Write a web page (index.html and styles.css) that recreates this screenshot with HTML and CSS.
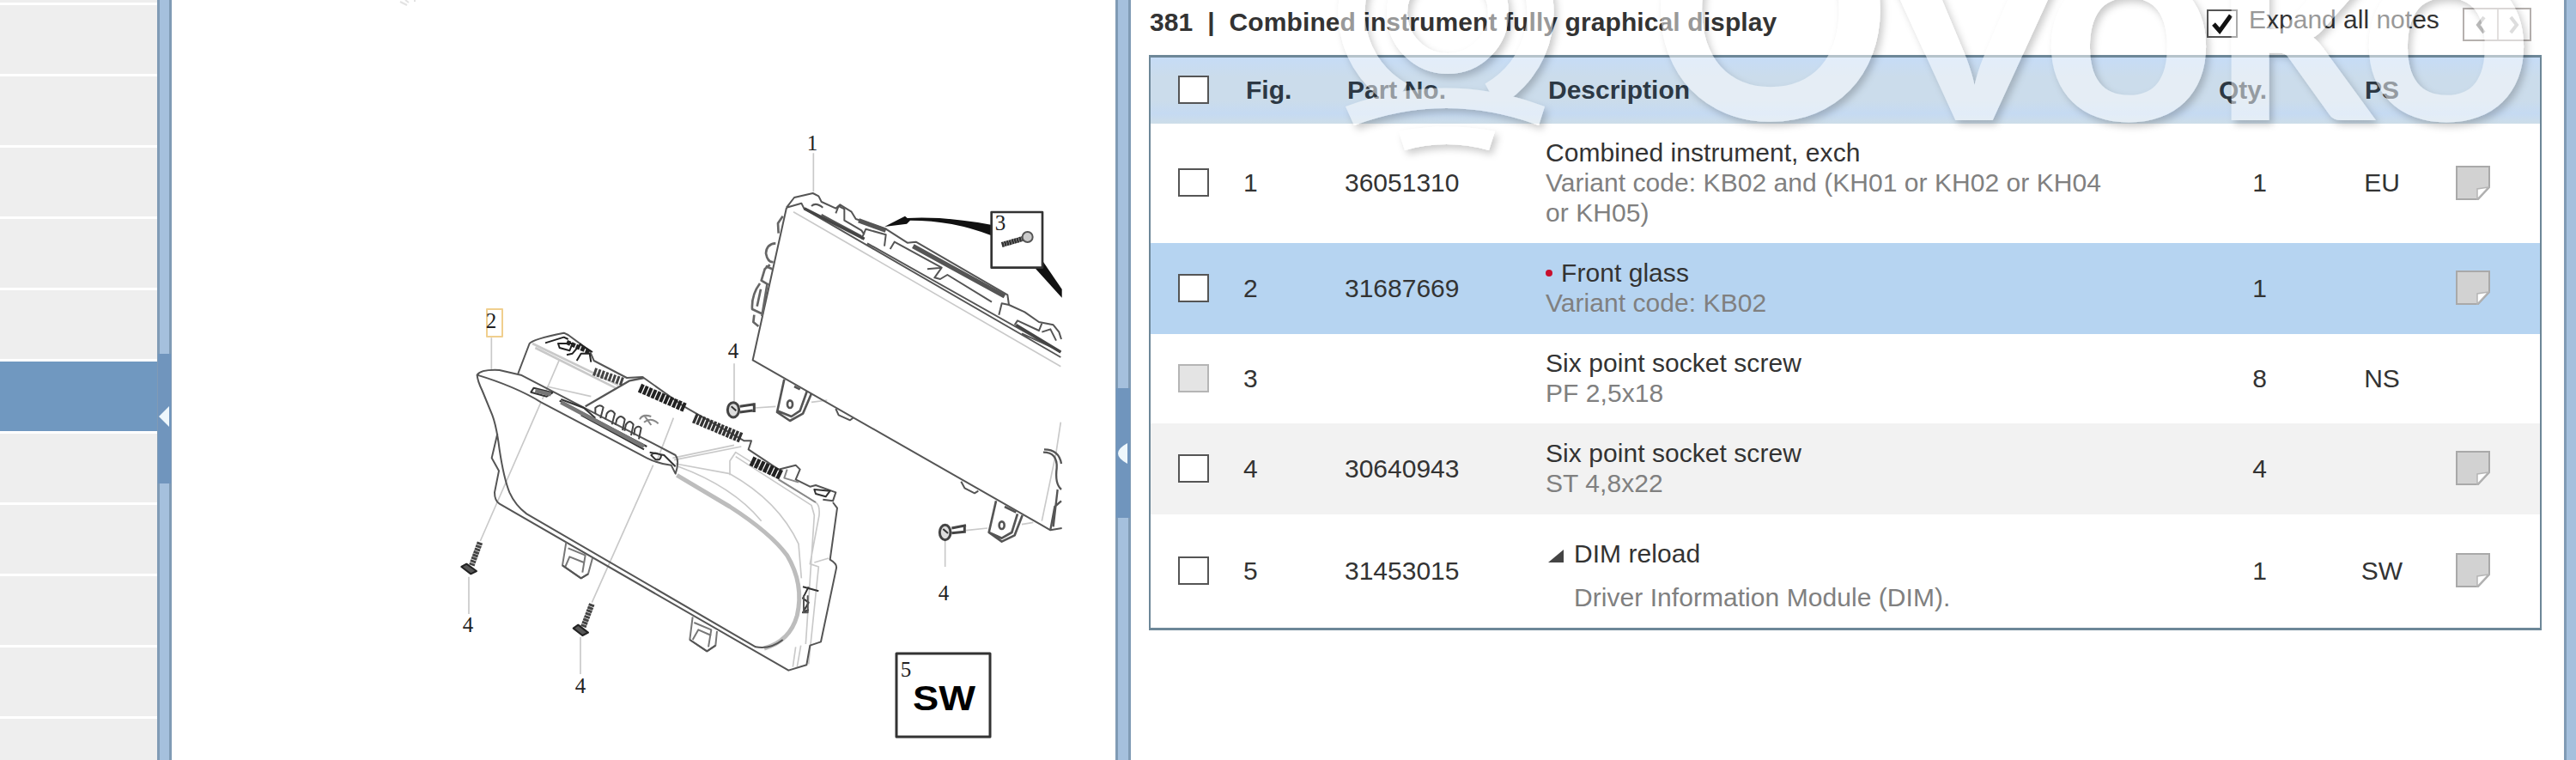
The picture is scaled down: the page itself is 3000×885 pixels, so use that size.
FILE: index.html
```html
<!DOCTYPE html>
<html lang="en">
<head>
  <meta charset="UTF-8">
  <title>Parts catalogue</title>
  <link rel="stylesheet" href="styles.css">
</head>
<body>
  <svg width="0" height="0" class="defs">
    <symbol id="note" viewBox="0 0 40 40">
      <path d="M1 1H39V25L26 39H1Z" fill="#d2d2d2" stroke="#a9a9a9" stroke-width="2"/>
      <path d="M25 39V27L38 25Z" fill="#fff" stroke="#b5b5b5" stroke-width="1.5"/>
    </symbol>
  </svg>

  <div class="app">
    <ul class="tree">
      <li class="first"></li>
      <li></li>
      <li></li>
      <li></li>
      <li></li>
      <li></li>
      <li class="active"></li>
      <li></li>
      <li></li>
      <li></li>
      <li></li>
      <li></li>
    </ul>

    <div class="splitter left"><div class="handle"><svg width="12" height="24"><path d="M0 12L12 0V24Z" fill="#eef7fc"/></svg></div></div>

    <div class="figure">
      <svg width="1099" height="885" viewBox="200 0 1099 885" fill="none" stroke-linejoin="round">
        <path d="M466 2l8 4m-2-6l4 3m6-2l2 0" stroke="#e2e2e2" stroke-width="2"/>

        <!-- front glass and housing -->
        <g transform="translate(520 340) scale(.33333)" stroke="#555" stroke-width="6">
          <g stroke="#c9c9c9" stroke-width="5">
            <path d="M157 160V270M78 995V1125M468 1205V1335M1005 250V385M395 235L335 375M330 385L118 870M793 440L735 590M722 605L508 1085M1078 405L1150 400M1275 385L1330 378"/>
            <path d="M300 180L600 325M310 195L590 335" stroke-width="8"/>
            <path d="M350 330L505 365M790 580L1005 535M795 587L1030 540M800 600L990 635Q1160 730 1230 880L1240 1000" />
            <path d="M810 610Q1000 680 1100 800M990 640V590L1010 560L1290 735Q1305 745 1302 780L1270 950L1300 960L1265 1300M1010 575L1275 745L1285 780L1255 1230"/>
            <path d="M1285 945L1335 930M1220 1240L1210 1310M1238 1235L1225 1310"/>
            <path d="M805 640L990 750Q1130 840 1190 920Q1250 1020 1225 1130Q1200 1220 1110 1245" stroke="#bdbdbd" stroke-width="15"/>
          </g>
          <path d="M107 290Q120 270 185 273L260 290L800 570Q815 590 800 635L785 605Q740 600 700 580L330 385Q240 330 107 290Z"/>
          <path d="M107 290Q108 310 125 345L160 430Q175 470 185 550Q200 650 220 700Q240 745 280 775L1080 1240Q1130 1250 1175 1215"/>
          <path d="M178 495L158 580L183 625L168 700Q168 730 185 740L1195 1322L1258 1303L1270 1235L1308 1222L1362 965Q1365 950 1340 935L1365 755L1350 735"/>
          <path d="M250 285L290 180Q300 165 410 143L425 150L500 205L515 240L630 300L685 297L830 400L1040 520L1065 520L1055 550L1160 620L1220 605L1235 620L1220 655L1270 680L1290 675L1360 700L1350 730L1315 725"/>
          <path d="M485 400L640 310L690 300" stroke-width="7"/>
          <path d="M345 178L410 158L425 165M390 180L440 180L430 205L395 195ZM420 220L440 215L470 180M470 185L510 210M455 240L470 215L500 215L505 245" stroke="#222"/>
          <path d="M420 175L500 210" stroke="#222" stroke-width="16" stroke-dasharray="14 4"/>
          <path d="M515 278L620 315" stroke="#444" stroke-width="28" stroke-dasharray="9 5"/>
          <path d="M675 335L835 405" stroke="#222" stroke-width="32" stroke-dasharray="12 4"/>
          <path d="M865 440L1030 510" stroke="#333" stroke-width="36" stroke-dasharray="10 4"/>
          <path d="M1065 590L1170 640" stroke="#222" stroke-width="34" stroke-dasharray="13 4"/>
          <path d="M305 335L370 352L350 365L295 350ZM395 380L700 540M470 430L690 550M400 375L480 405L520 440M710 560L760 570L800 610M715 570q10-15 35 0q0 20-20 15Z" stroke="#333"/>
          <path d="M310 345L365 358M400 385L690 540" stroke="#777" stroke-width="14"/>
          <path d="M520 425v-20q15-16 28-2l-10 38M555 445l5-20q15-20 28 0l-10 38M590 465l5-20q13-20 28 0l-8 38M622 485l5-22q13-20 26 0l-8 38M655 500l3-22q12-14 22-2l-8 38" stroke="#444"/>
          <path d="M675 445q10-20 40-10M690 455q25-20 50 5M690 430L715 465" stroke="#888"/>
          <path d="M1285 690L1340 695L1325 715L1290 705ZM1245 1030L1300 1045M1265 1030L1245 1070L1265 1085L1245 1120L1265 1110" stroke="#333"/>
          <path d="M1248 1060V1120H1262V1060" stroke="#555"/>
          <path d="M1190 620L1180 650L1230 665M1160 655L1290 735" stroke="#888"/>
          <!-- lower clips -->
          <path d="M418 875L405 955L470 1000L495 985L510 930M425 895L485 920L475 980M415 960L430 925L480 945" stroke="#777"/>
          <path d="M860 1135L850 1215L910 1255L940 1235L945 1185M865 1155L925 1180L915 1240M860 1215L880 1180L925 1200" stroke="#777"/>
          <path d="M850 1215L910 1255L940 1235M405 955L470 1000L495 985"/>
          <!-- screws -->
          <path d="M117 875L88 955M508 1090L478 1170" stroke="#444" stroke-width="20" stroke-dasharray="9 2"/>
          <path d="M52 960L70 950L105 975L85 985ZM443 1175L460 1163L495 1190L475 1200Z" fill="#555" stroke="#222"/>
          <path d="M1025 400L1075 392M1025 420L1070 414M1075 388V420" stroke="#444" stroke-width="9"/>
          <ellipse cx="1002" cy="412" rx="20" ry="26" fill="#ddd" stroke="#444" stroke-width="9"/>
          <path d="M995 400L1012 415" stroke="#333"/>
        </g>

        <!-- combined instrument, cut off by the pane edge -->
        <g transform="translate(850 140) scale(.33333)" stroke="#555" stroke-width="6">
          <g stroke="#c9c9c9" stroke-width="5">
            <path d="M292 115V250M752 1470V1560M222 320L1156 860M825 1433L900 1425M1156 1055L1140 1160L1090 1400M1020 1412L1060 1405"/>
          </g>
          <path d="M198 305L80 838L1085 1412L1120 1432L1160 1425"/>
          <path d="M198 305L225 270L290 255L310 265L320 285L370 308L385 295L425 320L440 345L545 380L620 428L650 425L970 610L975 645L1030 670L1080 705L1130 715L1150 740L1158 765"/>
          <path d="M198 305L250 290L260 310L1156 828M320 330L460 405M480 430L1156 810M285 300Q300 285 325 305M370 325L380 300L400 310L400 350L460 385L470 400M460 415L475 380L545 400L540 440M560 450L575 425L740 515L690 520M740 515L715 550L735 555L760 540L915 635M940 680L950 640L975 645M995 715L1005 700L1080 735L1090 710M1090 740L1120 730L1140 770M1020 745L1140 800"/>
          <path d="M450 350L545 385M640 440L960 615" stroke="#555" stroke-width="16"/>
          <path d="M260 308L470 415M1000 715L1156 810" stroke="#444" stroke-width="10"/>
          <path d="M185 335L168 360L170 395M160 430Q128 432 126 465Q132 498 152 495M140 505L122 520L110 560L135 575M105 570Q75 610 78 660L110 675M108 590L95 650M130 575L112 685M85 680L82 705L100 720M125 510L148 520" stroke="#666" stroke-width="8"/>
          <path d="M370 1008L380 1030L420 1048L430 1040M808 1262L820 1285L855 1303L868 1295"/>
          <!-- brackets -->
          <path d="M190 905L165 1020L210 1050L255 1025L285 955M270 945L245 1015L215 1035L165 1015M225 930L245 940" stroke-width="8"/>
          <ellipse cx="210" cy="992" rx="9" ry="13" stroke-width="8"/>
          <path d="M930 1330L905 1440L950 1472L995 1450L1022 1380M1005 1375L985 1440L950 1460L905 1440M960 1350L1000 1370" stroke-width="8"/>
          <ellipse cx="950" cy="1415" rx="9" ry="13" stroke-width="8"/>
          <!-- cable -->
          <path d="M1095 1160Q1145 1160 1142 1215Q1135 1270 1158 1290M1098 1150Q1150 1150 1158 1200M1145 1290L1130 1420M1158 1330L1135 1350L1120 1430" stroke-width="7"/>
          <path d="M775 1425L825 1415M775 1442L820 1438M820 1412V1442" stroke="#444" stroke-width="9"/>
          <ellipse cx="752" cy="1440" rx="19" ry="26" fill="#ddd" stroke="#444" stroke-width="9"/>
          <path d="M745 1428L762 1443" stroke="#333"/>
          <!-- callout for the socket screw -->
          <path d="M540 372L612 335L620 342Q750 335 912 365V402Q780 350 630 350L618 362Z" fill="#111" stroke="none"/>
          <path d="M1065 515L1095 495L1160 590V620Z" fill="#111" stroke="none"/>
          <rect x="914" y="321" width="178" height="194" fill="#fff" stroke="#333" stroke-width="8"/>
          <path d="M950 435L1030 412" stroke="#333" stroke-width="18" stroke-dasharray="8 1"/>
          <circle cx="1040" cy="408" r="18" fill="#ccc" stroke="#555"/>
        </g>

        <rect x="1044" y="761" width="109" height="97" stroke="#333" stroke-width="3"/>
        <rect x="567" y="360" width="18" height="32" stroke="#f0cf8e" stroke-width="2"/>
        <g class="marks">
          <text x="946" y="175">1</text>
          <text x="572" y="382">2</text>
          <text x="1165" y="268">3</text>
          <text x="854" y="417">4</text>
          <text x="545" y="736">4</text>
          <text x="676" y="807">4</text>
          <text x="1099" y="699">4</text>
          <text x="1055" y="788">5</text>
        </g>
        <text class="sw" x="1063" y="827" textLength="73" lengthAdjust="spacingAndGlyphs">SW</text>
      </svg>
    </div>

    <div class="splitter middle"><div class="handle"><svg width="11" height="24"><path d="M11 0Q0 6 0 12Q0 18 11 24Z" fill="#eef7fc"/></svg></div></div>

    <div class="parts">
      <div class="title-bar">
        <h1>381 &nbsp;|&nbsp; Combined instrument fully graphical display</h1>
        <span class="box checked"><svg width="24" height="24" viewBox="0 0 24 24"><path d="M2 12L9 20L22 2" fill="none" stroke="#111" stroke-width="5"/></svg></span>
        <label>Expand all notes</label>
        <div class="nav">
          <span><svg width="16" height="22"><path d="M12 2L5 11L12 20" fill="none" stroke="#bbb" stroke-width="4"/></svg></span>
          <span><svg width="16" height="22"><path d="M4 2L11 11L4 20" fill="none" stroke="#bbb" stroke-width="4"/></svg></span>
        </div>
      </div>

      <div class="table">
        <div class="row head">
          <span class="box"></span><span class="fig">Fig.</span><span class="fig">Part No.</span><span class="fig">Description</span><span class="qty">Qty.</span><span class="ps">PS</span><span></span>
        </div>
        <div class="row r1">
          <span class="box"></span><span>1</span><span class="no">36051310</span>
          <div class="desc">Combined instrument, exch<p>Variant code: KB02 and (KH01 or KH02 or KH04<br>or KH05)</p></div>
          <span class="qty">1</span><span class="ps">EU</span><svg class="note"><use href="#note"/></svg>
        </div>
        <div class="row r2">
          <span class="box"></span><span>2</span><span class="no">31687669</span>
          <div class="desc"><i class="dot"></i>Front glass<p>Variant code: KB02</p></div>
          <span class="qty">1</span><span class="ps"></span><svg class="note"><use href="#note"/></svg>
        </div>
        <div class="row r3">
          <span class="box disabled"></span><span>3</span><span class="no"></span>
          <div class="desc">Six point socket screw<p>PF 2,5x18</p></div>
          <span class="qty">8</span><span class="ps">NS</span><span></span>
        </div>
        <div class="row r4">
          <span class="box"></span><span>4</span><span class="no">30640943</span>
          <div class="desc">Six point socket screw<p>ST 4,8x22</p></div>
          <span class="qty">4</span><span class="ps"></span><svg class="note"><use href="#note"/></svg>
        </div>
        <div class="row r5">
          <span class="box"></span><span>5</span><span class="no">31453015</span>
          <div class="desc"><svg class="tri" width="18" height="15"><path d="M18 0V15H0Z" fill="#444"/></svg>DIM reload<p>Driver Information Module (DIM).</p></div>
          <span class="qty">1</span><span class="ps">SW</span><svg class="note"><use href="#note"/></svg>
        </div>
      </div>
    </div>

    <div class="splitter right"></div>
  </div>

  <svg class="watermark" width="1440" height="190" viewBox="1540 0 1440 190">
    <filter id="lift" filterUnits="userSpaceOnUse" x="1540" y="-150" width="1440" height="340">
      <feGaussianBlur in="SourceAlpha" stdDeviation="4"/>
      <feOffset dx="4" dy="5" result="blur"/>
      <feFlood flood-color="#000" flood-opacity=".2"/>
      <feComposite in2="blur" operator="in"/>
      <feComposite in2="SourceAlpha" operator="out" result="shade"/>
      <feComponentTransfer in="SourceGraphic" result="body"><feFuncA type="linear" slope=".5"/></feComponentTransfer>
      <feMerge><feMergeNode in="shade"/><feMergeNode in="body"/></feMerge>
    </filter>
    <g filter="url(#lift)" fill="#fff">
      <circle cx="1686" cy="15" r="59" fill="none" stroke="#fff" stroke-width="24"/>
      <path d="M1631 111A110 110 0 1 1 1737 111" fill="none" stroke="#fff" stroke-width="31"/>
      <path d="M1567 124Q1684 81 1799 124L1792 146Q1684 106 1577 146Z"/>
      <path d="M1629 153Q1684 142 1741 153L1734 175Q1684 161 1636 175Z"/>
      <text x="1921" y="139" font-size="353" textLength="282" lengthAdjust="spacingAndGlyphs">O</text>
      <text x="2197" y="140" font-size="334" textLength="204" lengthAdjust="spacingAndGlyphs">v</text>
      <text x="2377" y="140" font-size="334" textLength="204" lengthAdjust="spacingAndGlyphs">o</text>
      <text x="2577" y="140" font-size="334" textLength="190" lengthAdjust="spacingAndGlyphs">k</text>
      <text x="2747" y="140" font-size="334" textLength="204" lengthAdjust="spacingAndGlyphs">o</text>
    </g>
  </svg>
</body>
</html>
```
FILE: styles.css
```css
* {
  box-sizing: border-box;
}
body {
  margin: 0;
  background: #fff;
  color: #333;
  font-family: "Liberation Sans", Arial, sans-serif;
  font-size: 30px;
  line-height: 35px;
}
.defs {
  position: absolute;
}
.app {
  display: flex;
  height: 885px;
  overflow: hidden;
}

/* left tree */
.tree {
  width: 183px;
  margin: 0;
  padding: 0;
  list-style: none;
}
.tree li {
  height: 83.1px;
  border-bottom: 3px solid #fff;
  background: #eee;
}
.tree .first {
  height: 6px;
}
.tree .active {
  background: #7098c0;
}

/* splitters */
.splitter {
  display: flex;
  flex-direction: column;
  background: #a5c0dd;
  border-left: 3px solid #809bb5;
  border-right: 3px solid #809bb5;
}
.splitter.left {
  width: 17px;
}
.splitter.middle {
  width: 18px;
}
.splitter.right {
  width: 14px;
  border-right: 0;
}
.handle {
  display: flex;
  align-items: center;
  height: 151px;
  margin: 412px -2px 0;
  background: #7095bd;
}
.handle svg {
  margin-left: 2px;
}
.left .handle svg {
  margin-left: 1px;
  margin-top: -5px;
}
.middle .handle {
  margin-top: 452px;
}

/* drawing */
.figure {
  width: 1099px;
}
.figure svg {
  display: block;
}
.marks text {
  fill: #222;
  font-family: "Liberation Serif", serif;
  font-size: 25px;
  text-anchor: middle;
}
.sw {
  fill: #000;
  font-size: 40px;
  font-weight: bold;
}

/* parts list */
.parts {
  width: 1669px;
  padding: 0 26px 0 21px;
}
.title-bar {
  display: flex;
  align-items: flex-start;
  height: 64px;
}
h1 {
  width: 1232px;
  margin: 8px 0 0;
  padding-left: 1px;
  font-size: 30px;
  line-height: 35px;
  letter-spacing: .1px;
  white-space: nowrap;
}
.box {
  display: block;
  width: 36px;
  height: 33px;
  margin-left: 32px;
  border: 2px solid #555;
  background: #fff;
}
.disabled {
  border-color: #b5b5b5;
  background: #e4e4e4;
}
.checked {
  display: flex;
  align-items: center;
  justify-content: center;
  margin: 11px 0 0;
}
label {
  width: 262px;
  padding-left: 13px;
  margin-top: 5px;
  white-space: nowrap;
}
.nav {
  display: flex;
  margin-top: 9px;
  border: 2px solid #b5b0ae;
}
.nav span {
  display: flex;
  align-items: center;
  justify-content: center;
  width: 38px;
  height: 35px;
}
.nav span + span {
  border-left: 2px solid #c5c0be;
}
.table {
  height: 670px;
  border: 2px solid #6d8798;
  border-top-width: 3px;
  border-bottom-width: 3px;
}
.row {
  display: grid;
  grid-template-columns: 108px 118px 234px 680px 160px 206px 1fr;
  align-items: center;
  padding-bottom: 2px;
  white-space: nowrap;
}
.head {
  height: 77px;
  background: linear-gradient(#c6dcf6, #cbdceb 30%, #cbdceb 65%, #c5daf2 85%, #cddde8);
  font-weight: bold;
  color: #2c3844;
}
.fig {
  padding-left: 3px;
}
.r1 {
  height: 139px;
}
.r2 {
  height: 106px;
  background: #b6d4f1;
}
.r3 {
  height: 104px;
}
.r4 {
  height: 106px;
  background: #f2f2f2;
}
.r5 {
  height: 132px;
}
.qty {
  text-align: right;
}
.ps {
  padding-left: 62px;
  text-align: center;
}
.note {
  width: 40px;
  height: 40px;
  margin-left: 14px;
}
.desc {
  letter-spacing: .05px;
}
.desc p {
  margin: 0;
  color: #808080;
}
.dot {
  display: inline-block;
  width: 8px;
  height: 8px;
  margin-right: 10px;
  border-radius: 50%;
  background: #c8102e;
  vertical-align: 6px;
}
.tri {
  margin: 0 12px 0 3px;
}
.r5 .desc {
  padding-top: 11px;
}
.r5 p {
  margin-top: 16px;
  padding-left: 33px;
}

/* logo lying over the list */
.watermark {
  position: absolute;
  top: 0;
  left: 1540px;
  font-family: Lato, sans-serif;
  font-weight: bold;
}
```
